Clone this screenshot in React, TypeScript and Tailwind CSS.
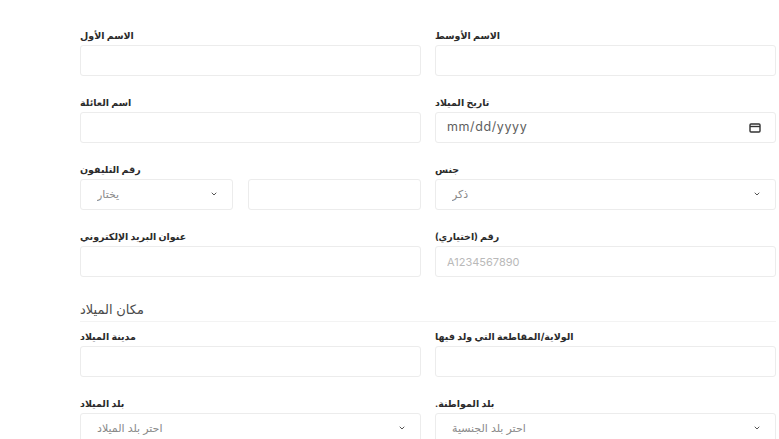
import { ChevronDown } from 'lucide-react'

const font = { fontFamily: 'Inter, "Noto Sans", "DejaVu Sans", sans-serif' }

function Label({ children }: { children: React.ReactNode }) {
  return <label className="mb-[2px] block text-[9.5px] font-bold leading-[14px] text-[#2b2b2b]">{children}</label>
}

function TextInput({ placeholder }: { placeholder?: string }) {
  return (
    <input
      type="text"
      placeholder={placeholder}
      className="h-[31px] w-full rounded-[3px] border border-[#ececec] bg-white px-[11px] text-[11px] text-[#444] outline-none placeholder:text-[#b9b9b9]"
    />
  )
}

function Select({ value, className = '' }: { value: string; className?: string }) {
  return (
    <div className={`relative ${className}`}>
      <select
        defaultValue={value}
        className="h-[31px] w-full appearance-none rounded-[3px] border border-[#ececec] bg-white pl-[16px] pr-8 text-[11px] text-[#8a8a8a] outline-none"
      >
        <option>{value}</option>
      </select>
      <ChevronDown className="pointer-events-none absolute right-[15px] top-[11px] h-[8px] w-[8px] text-[#555]" strokeWidth={3} />
    </div>
  )
}

function Field({ label, children }: { label: string; children: React.ReactNode }) {
  return (
    <div>
      <Label>{label}</Label>
      {children}
    </div>
  )
}

export default function App() {
  return (
    <div className="min-h-screen bg-white pl-20 pr-[3px] pt-[29px]" style={font}>
      <div className="grid grid-cols-2 gap-x-[14px] gap-y-[20px]">
        <Field label="الاسم الأول">
          <TextInput />
        </Field>
        <Field label="الاسم الأوسط">
          <TextInput />
        </Field>
        <Field label="اسم العائلة">
          <TextInput />
        </Field>
        <Field label="تاريخ الميلاد">
          <div className="flex h-[31px] w-full items-center justify-between rounded-[3px] border border-[#ececec] bg-white pl-[11px] pr-[14px]">
            <span className="text-[12.5px] tracking-[0.6px] text-[#5e5e5e]">mm/dd/yyyy</span>
            <svg width="12" height="10" viewBox="0 0 12 10" fill="none">
              <rect x="1" y="1" width="10" height="8" rx="1" stroke="#333" strokeWidth="1.4" />
              <line x1="1" y1="3.5" x2="11" y2="3.5" stroke="#333" strokeWidth="1.4" />
            </svg>
          </div>
        </Field>
        <Field label="رقم التليفون">
          <div className="flex gap-[15px]">
            <Select value="يختار" className="w-[153px] shrink-0" />
            <TextInput />
          </div>
        </Field>
        <Field label="جنس">
          <Select value="ذكر" />
        </Field>
        <Field label="عنوان البريد الإلكتروني">
          <TextInput />
        </Field>
        <Field label="رقم (اختياري)">
          <TextInput placeholder="A1234567890" />
        </Field>
      </div>

      <div className="mt-[23px] border-b border-[#f3f3f3] pb-[3px] text-[13px] leading-[18px] text-[#4a4a4a]">مكان الميلاد</div>

      <div className="mt-[8px] grid grid-cols-2 gap-x-[14px] gap-y-[20px]">
        <Field label="مدينة الميلاد">
          <TextInput />
        </Field>
        <Field label="الولاية/المقاطعة التي ولد فيها">
          <TextInput />
        </Field>
        <Field label="بلد الميلاد">
          <Select value="احتر بلد الميلاد" />
        </Field>
        <Field label=".بلد المواطنة">
          <Select value="احتر بلد الجنسية" />
        </Field>
      </div>
    </div>
  )
}
